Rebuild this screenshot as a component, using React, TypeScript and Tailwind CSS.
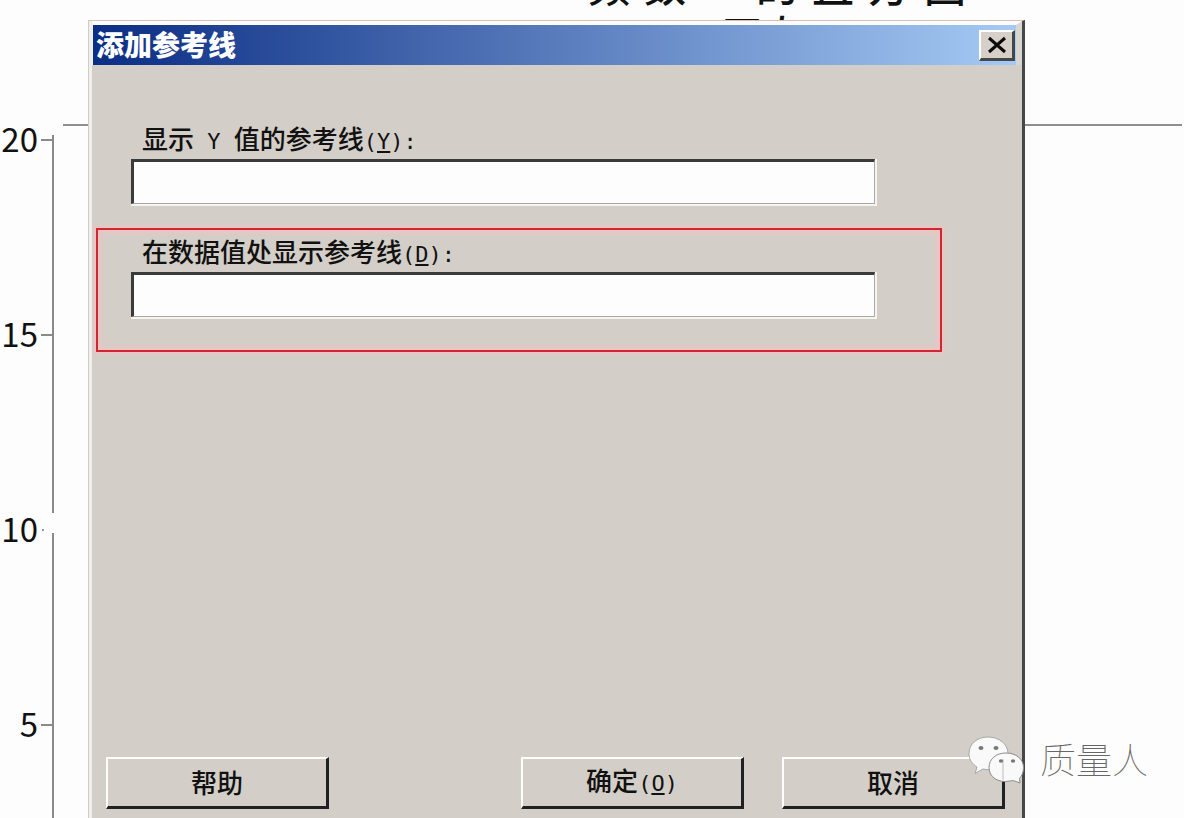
import type { ReactNode } from "react";

function Latin({ children }: { children: ReactNode }) {
  return <span className="whitespace-pre font-['DejaVu_Sans_Mono',monospace] text-[22px] font-normal">{children}</span>;
}

function Shortcut({ letter }: { letter: string }) {
  return (
    <Latin>
      (<u className="decoration-2 underline-offset-2">{letter}</u>)
    </Latin>
  );
}

function Field({ id, label }: { id: string; label: ReactNode }) {
  return (
    <div className="flex flex-col">
      <label htmlFor={id} className="flex h-10 items-center pt-[2px] pl-[11px] text-[26px] leading-10 font-medium">
        <span>{label}</span>
      </label>
      <div className="border-r-2 border-b-2 border-[#f5f4f1]">
        <input
          id={id}
          type="text"
          className="block h-[45px] w-full border-t-[3px] border-r border-b border-l-[3px] border-t-[#3a3c3b] border-r-[#aaa9a6] border-b-[#aaa9a6] border-l-[#3a3c3b] bg-[#fdfdfd] px-2 text-2xl outline-none"
        />
      </div>
    </div>
  );
}

function PushButton({ children }: { children: ReactNode }) {
  return (
    <button
      type="button"
      className="flex h-[52px] w-[223px] items-center justify-center border-t-2 border-r-[3px] border-b-[3px] border-l-2 border-t-white border-r-[#202122] border-b-[#202122] border-l-white pb-[2px] text-[26px] leading-10 font-medium"
    >
      <span>{children}</span>
    </button>
  );
}

function Tick({ value, faint = false }: { value: string; faint?: boolean }) {
  return (
    <div className="flex h-8 items-center">
      <span className="flex w-[38px] justify-end pb-1 text-[33px] leading-8">{value}</span>
      <span className={faint ? "ml-1 h-[2px] w-[2px] bg-[#999]" : "ml-[3px] h-[2px] w-3 bg-[#8a8a8a]"} />
    </div>
  );
}

function Chart() {
  return (
    <div className="absolute inset-0 overflow-hidden">
      <div className="absolute top-[-36px] right-[218px] flex gap-[14px] text-[42px] leading-10 font-medium">
        <span>频</span>
        <span>数</span>
        <span className="ml-14">的</span>
        <span>直</span>
        <span>方</span>
        <span>图</span>
      </div>
      <div className="absolute top-[13px] right-[382px] text-[40px] leading-10 font-medium">正态</div>
      <div className="absolute top-[124px] right-[2px] left-[63px] h-[2px] bg-[#8f8f91]" />
      <div className="absolute top-[135px] bottom-0 left-[52px] flex w-[2px] flex-col gap-5">
        <div className="h-[378px] bg-[#8a8a8a]" />
        <div className="grow bg-[#8a8a8a]" />
      </div>
      <div className="absolute top-[124px] left-0 flex flex-col gap-[163px]">
        <Tick value="20" />
        <Tick value="15" />
        <Tick value="10" faint />
        <Tick value="5" />
      </div>
    </div>
  );
}

function Watermark() {
  return (
    <div className="pointer-events-none absolute right-9 bottom-[34px] flex items-center gap-4">
      <svg viewBox="0 0 56 48" className="h-12 w-14" aria-hidden="true">
        <path
          d="M20 1C9 1 1 8 1 17.500c0 6 3 10.500 8 13.500l-2 6.500 8-4.500c15 3 25-5 25-15.500C40 8 31 1 20 1Z"
          fill="#f9f9f9"
          stroke="#a8a8a8"
        />
        <path
          d="M38 17c-10 0-17 6-17 14.500 0 9.500 9 16 21 13.500 2-.5 4-.5 6 .5l4 1.500-.500-4.500c2.500-2.500 4-6.500 4-11C55.500 23 48 17 38 17Z"
          fill="#f9f9f9"
          stroke="#8c8c8c"
        />
        <path d="M35 23v21" stroke="#bdbdbd" />
        <g fill="#77777a">
          <ellipse cx="13" cy="12" rx="2.500" ry="2" />
          <ellipse cx="28" cy="12" rx="2.500" ry="2" />
          <ellipse cx="33" cy="25" rx="2.200" ry="1.800" />
          <ellipse cx="45" cy="25" rx="2.200" ry="1.800" />
        </g>
      </svg>
      <span className="pb-1 text-4xl leading-10 font-thin text-[#666]">质量人</span>
    </div>
  );
}

export default function App() {
  return (
    <main className="relative flex min-h-screen flex-col bg-[#fdfdfd] pt-5 font-['Noto_Sans_CJK_SC',sans-serif] text-[#111]">
      <Chart />
      <section
        role="dialog"
        aria-labelledby="dialog-title"
        className="relative mr-[159px] ml-[88px] flex grow flex-col border-t border-r-[3px] border-l border-t-[#d6c5b6] border-r-[#444849] border-l-[#d0ccc8] bg-[#d3cec7]"
      >
        <div className="flex grow flex-col border-l-[3px] border-[#f1efec]">
          <header className="flex h-11 border-t-4 border-r-[6px] border-l border-t-[#fdfcfa] border-r-[#d9d5d0] border-l-[#f1efec] bg-[linear-gradient(90deg,#0b2d84,#a5caf4)]">
            <h1 id="dialog-title" className="grow pl-[3px] text-[28px] leading-[38px] font-black text-white">
              添加参考线
            </h1>
            <button
              type="button"
              aria-label="关闭"
              className="mt-[5px] mr-px flex h-[31px] w-9 items-center justify-center border-t-2 border-r-[3px] border-b-[3px] border-l-2 border-t-white border-r-[#444849] border-b-[#444849] border-l-white bg-[#d6d0c8]"
            >
              <svg viewBox="0 0 20 18" className="h-[18px] w-5" aria-hidden="true">
                <path d="M2 2l16 14M18 2L2 16" stroke="#0b0b0b" strokeWidth="3" />
              </svg>
            </button>
          </header>
          <form className="flex grow flex-col pt-[54px] pb-[9px]" onSubmit={(event) => event.preventDefault()}>
            <div className="mr-[145px] ml-[39px]">
              <Field
                id="y-value"
                label={
                  <>
                    显示<Latin> Y </Latin>值的参考线
                    <Shortcut letter="Y" />
                    <Latin>:</Latin>
                  </>
                }
              />
            </div>
            <div className="mt-[22px] mr-20 ml-1 border-2 border-[#d22730] pt-[2px] pr-[63px] pb-[31px] pl-[33px] shadow-[0_0_3px_2px_#eec4c4,inset_0_0_4px_3px_#eec4c4]">
              <Field
                id="data-value"
                label={
                  <>
                    在数据值处显示参考线
                    <Shortcut letter="D" />
                    <Latin>:</Latin>
                  </>
                }
              />
            </div>
            <div className="mt-auto flex pr-[17px] pl-[14px]">
              <div className="mr-auto">
                <PushButton>帮助</PushButton>
              </div>
              <div className="flex gap-[38px]">
                <PushButton>
                  确定
                  <Shortcut letter="O" />
                </PushButton>
                <PushButton>取消</PushButton>
              </div>
            </div>
          </form>
        </div>
      </section>
      <Watermark />
    </main>
  );
}
